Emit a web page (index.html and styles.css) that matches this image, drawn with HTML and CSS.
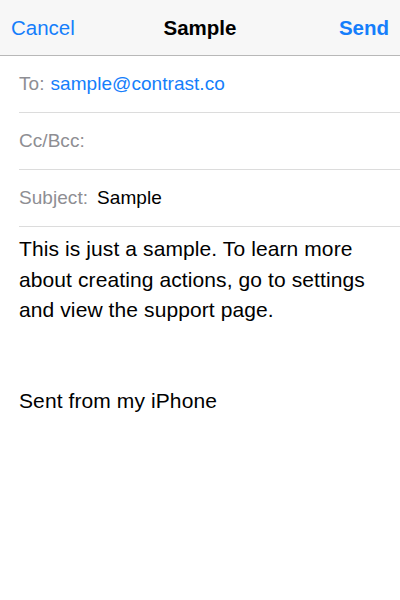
FILE: index.html
```html
<!DOCTYPE html>
<html lang="en">
<head>
  <meta charset="UTF-8">
  <title>New Message</title>
  <link rel="stylesheet" href="styles.css">
</head>
<body>
<div class="compose">
  <!-- Navigation bar -->
  <div class="nav-bar">
    <span class="nav-btn">Cancel</span>
    <span class="nav-title">Sample</span>
    <span class="nav-btn nav-send">Send</span>
  </div>

  <!-- Header fields -->
  <div class="field">
    <span class="label">To:</span>
    <span class="value link">sample@contrast.co</span>
  </div>
  <div class="field">
    <span class="label">Cc/Bcc:</span>
  </div>
  <div class="field field-subject">
    <span class="label">Subject:</span>
    <span class="value">Sample</span>
  </div>

  <!-- Message body -->
  <div class="body-text">
    <p>This is just a sample. To learn more about creating actions, go to settings and view the support page.</p>
    <p class="signature">Sent from my iPhone</p>
  </div>
</div>
</body>
</html>
```

FILE: styles.css
```css
body {
  margin: 0;
  padding: 0;
  font-family: 'Liberation Sans', Arial, sans-serif;
  background: #fff;
  color: #000;
}

.compose {
  width: 400px;
  height: 600px;
}

.nav-bar {
  height: 55px;
  display: grid;
  grid-template-columns: 1fr auto 1fr;
  align-items: center;
  padding: 0 11px 0 11px;
  background: #f7f7f7;
  border-bottom: 1px solid #b8b8b8;
  font-size: 20.5px;
}

.nav-btn {
  color: #157efb;
}

.nav-send {
  font-weight: bold;
  justify-self: end;
}

.nav-title {
  font-weight: bold;
}

.field {
  height: 56px;
  margin-left: 19px;
  display: flex;
  align-items: center;
  gap: 6px;
  border-bottom: 1px solid #dcdcdc;
  font-size: 19px;
  letter-spacing: 0.05px;
}

.field-subject {
  gap: 9px;
}

.label {
  color: #8e8e93;
}

.value {
  color: #000;
}

.link {
  color: #157efb;
}

.body-text {
  padding: 7px 19px 0 19px;
  font-size: 21px;
  line-height: 30.5px;
  letter-spacing: 0.1px;
}

.body-text p {
  margin: 0;
}

.body-text .signature {
  margin-top: 60px;
}
```
